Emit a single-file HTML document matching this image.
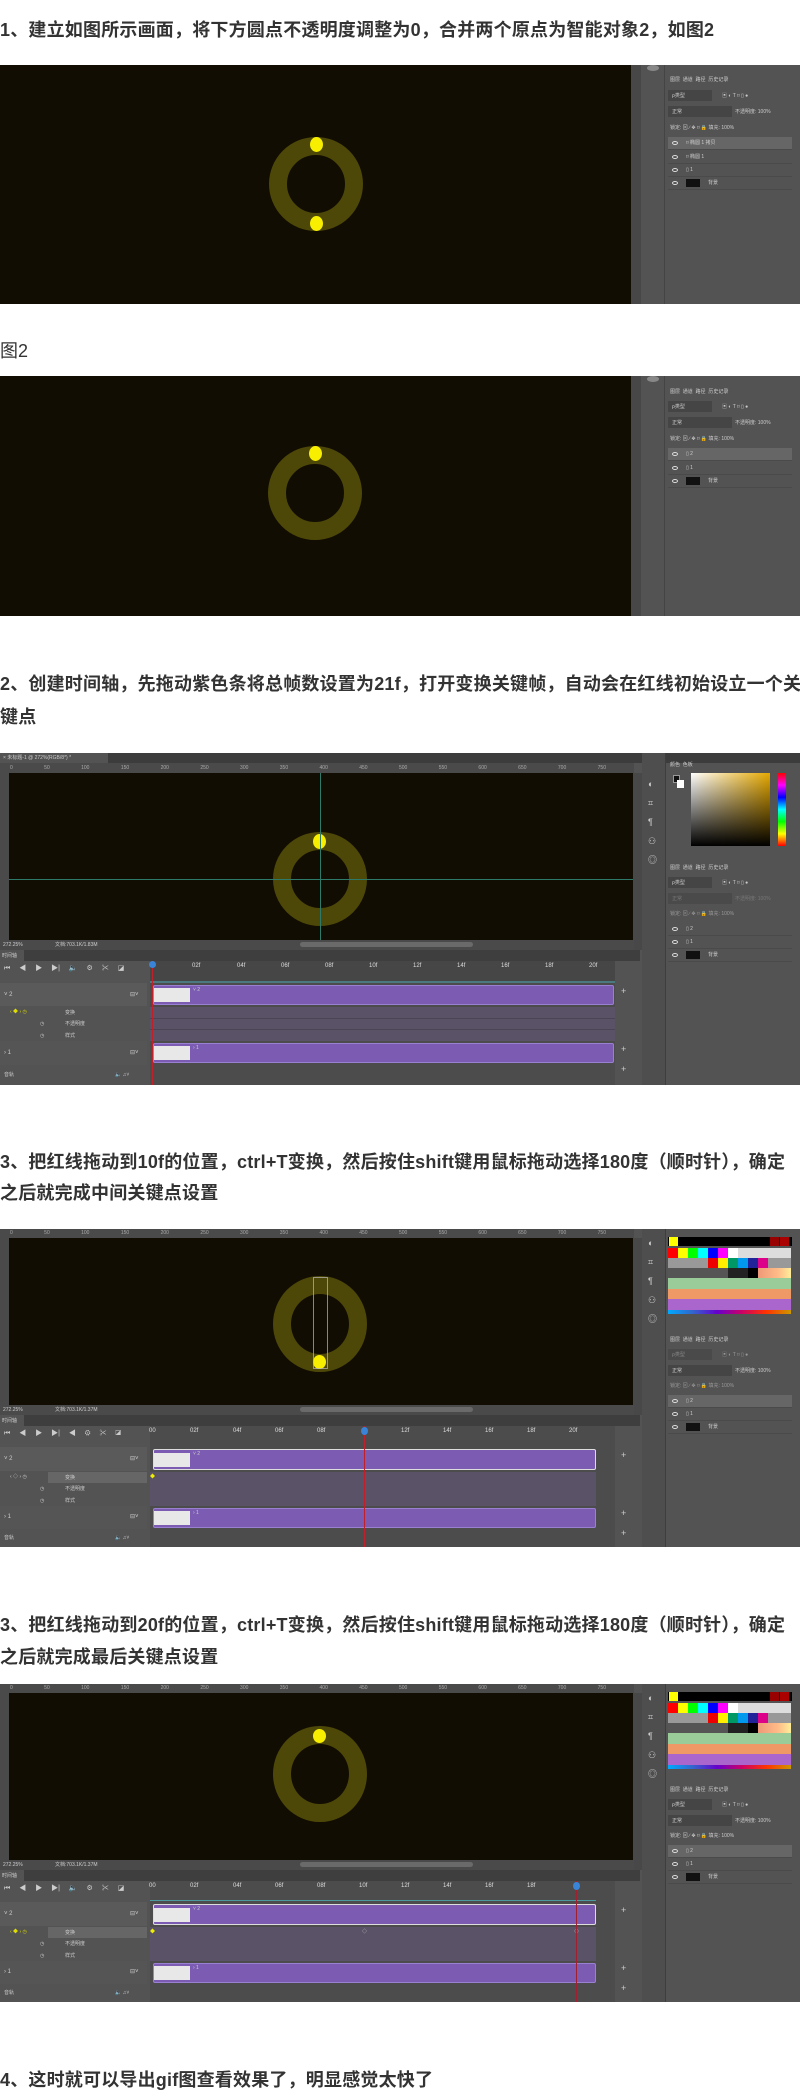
<!DOCTYPE html>
<html><head><meta charset="utf-8">
<style>
*{margin:0;padding:0;box-sizing:border-box}
body{width:800px;height:2094px;background:#fff;position:relative;overflow:hidden;font-family:"Liberation Sans","Noto Sans CJK SC",sans-serif}
.t{position:absolute;left:0;font-size:18px;font-weight:bold;color:#333;line-height:32px;white-space:nowrap;letter-spacing:0.2px}
.ss{position:absolute;left:0;width:800px;overflow:hidden;background:#535353}
.a{position:absolute}
.ring{position:absolute;border-radius:50%;border:18px solid #4d4808;width:94px;height:94px}
.dot{position:absolute;width:13px;height:15px;border-radius:50%;background:#f7ee00}
.px{position:absolute;font-size:5px;color:#ccc;white-space:nowrap;line-height:8px}
.lrow{position:absolute;left:668px;width:124px;height:13px;border-bottom:1px solid #4a4a4a}
.eye{position:absolute;left:4px;top:4px;width:6px;height:4px;border:1px solid #ddd;border-radius:50%}
.purp{position:absolute;background:#7b5cb2;border:1px solid #9a80d0;border-radius:2px}
.thumb{position:absolute;background:#e8e8e8}
.fl{position:absolute;font-size:6px;color:#ddd;top:210px}
.sw{position:absolute;width:9px;height:9px}
.swg{position:absolute;left:668px;width:123px;height:62px;background:
   linear-gradient(to bottom,transparent 0,transparent 10px,#999 10px,#999 20px,#555 20px,#555 30px,#9c9 30px,#9c9 41px,#e96 41px,#e96 51px,#a6c 51px,#a6c 62px),
   linear-gradient(to right,#f00 0,#f00 10px,#ff0 10px,#ff0 20px,#0f0 20px,#0f0 30px,#0ff 30px,#0ff 40px,#00f 40px,#00f 50px,#f0f 50px,#f0f 60px,#fff 60px,#fff 70px,#ddd 70px)}
.swo{position:absolute;left:668px;width:123px;height:10px;background:linear-gradient(to right,transparent 0,transparent 40px,#e00 40px,#e00 50px,#fe0 50px,#fe0 60px,#096 60px,#096 70px,#09e 70px,#09e 80px,#229 80px,#229 90px,#d08 90px,#d08 100px,transparent 100px)}
.swb{position:absolute;left:668px;width:123px;height:10px;background:linear-gradient(to right,transparent 0,transparent 60px,#222 60px,#222 80px,#000 80px,#000 90px,#e97 90px,#fb8 110px,#fe9 123px)}
</style></head><body>

<div class="t" style="top:14px">1、建立如图所示画面，将下方圆点不透明度调整为0，合并两个原点为智能对象2，如图2</div>

<div class="ss" style="top:65px;height:239px">
  <div class="a" style="left:0;top:0;width:631px;height:239px;background:#120d02"></div>
  <div class="a" style="left:631px;top:0;width:10px;height:239px;background:#474747"></div>
  <div class="a" style="left:641px;top:0;width:24px;height:239px;background:#535353;border-right:1px solid #444"></div>
  <div class="a" style="left:647px;top:0;width:12px;height:6px;border-radius:50%;background:#888"></div>
  <div class="ring" style="left:269px;top:72px"></div>
  <div class="dot" style="left:310px;top:72px"></div>
  <div class="dot" style="left:310px;top:151px"></div>
  <div class="px" style="left:670px;top:11px">图层&nbsp; 通道&nbsp; 路径&nbsp; 历史记录</div>
  <div class="a" style="left:668px;top:25px;width:44px;height:11px;background:#454545"></div>
  <div class="px" style="left:672px;top:27px">ρ类型</div>
  <div class="px" style="left:722px;top:27px">▣ ◐ T ⌑ ▯ ●</div>
  <div class="a" style="left:668px;top:41px;width:64px;height:11px;background:#454545"></div>
  <div class="px" style="left:672px;top:43px">正常</div>
  <div class="px" style="left:735px;top:43px">不透明度: 100%</div>
  <div class="px" style="left:670px;top:59px">锁定: ⊠ ∕ ✥ ⌑ 🔒 填充: 100%</div>
  <div class="lrow" style="top:72px;background:#666"><span class="eye"></span><span class="px" style="left:18px;top:2px">⌑ 椭圆 1 拷贝</span></div>
  <div class="lrow" style="top:86px"><span class="eye"></span><span class="px" style="left:18px;top:2px">⌑ 椭圆 1</span></div>
  <div class="lrow" style="top:99px"><span class="eye"></span><span class="px" style="left:18px;top:2px">▯ 1</span></div>
  <div class="lrow" style="top:112px"><span class="eye"></span><span class="a" style="left:18px;top:2px;width:14px;height:8px;background:#111"></span><span class="px" style="left:40px;top:2px">背景</span></div>
</div>

<div class="a" style="left:0;top:336px;font-size:18px;color:#333;line-height:30px">图2</div>

<div class="ss" style="top:376px;height:240px">
  <div class="a" style="left:0;top:0;width:631px;height:240px;background:#120d02"></div>
  <div class="a" style="left:631px;top:0;width:10px;height:240px;background:#474747"></div>
  <div class="a" style="left:641px;top:0;width:24px;height:240px;background:#535353;border-right:1px solid #444"></div>
  <div class="a" style="left:647px;top:0;width:12px;height:6px;border-radius:50%;background:#888"></div>
  <div class="ring" style="left:268px;top:70px"></div>
  <div class="dot" style="left:309px;top:70px"></div>
  <div class="px" style="left:670px;top:12px">图层&nbsp; 通道&nbsp; 路径&nbsp; 历史记录</div>
  <div class="a" style="left:668px;top:25px;width:44px;height:11px;background:#454545"></div>
  <div class="px" style="left:672px;top:27px">ρ类型</div>
  <div class="px" style="left:722px;top:27px">▣ ◐ T ⌑ ▯ ●</div>
  <div class="a" style="left:668px;top:41px;width:64px;height:11px;background:#454545"></div>
  <div class="px" style="left:672px;top:43px">正常</div>
  <div class="px" style="left:735px;top:43px">不透明度: 100%</div>
  <div class="px" style="left:670px;top:59px">锁定: ⊠ ∕ ✥ ⌑ 🔒 填充: 100%</div>
  <div class="lrow" style="top:72px;background:#666"><span class="eye"></span><span class="px" style="left:18px;top:2px">▯ 2</span></div>
  <div class="lrow" style="top:86px"><span class="eye"></span><span class="px" style="left:18px;top:2px">▯ 1</span></div>
  <div class="lrow" style="top:99px"><span class="eye"></span><span class="a" style="left:18px;top:2px;width:14px;height:8px;background:#111"></span><span class="px" style="left:40px;top:2px">背景</span></div>
</div>

<div class="t" style="top:668px">2、创建时间轴，先拖动紫色条将总帧数设置为21f，打开变换关键帧，自动会在红线初始设立一个关</div>
<div class="t" style="top:701px">键点</div>

<div class="ss" style="top:753px;height:332px">
  <div class="a" style="left:0;top:0;width:800px;height:10px;background:#3c3c3c"></div>
  <div class="a" style="left:0;top:0;width:108px;height:10px;background:#535353"></div>
  <div class="px" style="left:3px;top:1px">× 未标题-1 @ 272%(RGB/8*) *</div>
  <div class="a" style="left:0;top:10px;width:634px;height:10px;background:#4a4a4a"></div>
  <div class="px" style="left:10px;top:11px;color:#aaa;word-spacing:30px">0 50 100 150 200 250 300 350 400 450 500 550 600 650 700 750</div>
  <div class="a" style="left:0;top:20px;width:9px;height:167px;background:#4a4a4a"></div>
  <div class="a" style="left:9px;top:20px;width:624px;height:167px;background:#120d02"></div>
  <div class="ring" style="left:273px;top:79px"></div>
  <div class="dot" style="left:313px;top:81px"></div>
  <div class="a" style="left:9px;top:126px;width:624px;height:1px;background:#2e7a6a"></div>
  <div class="a" style="left:320px;top:20px;width:1px;height:175px;background:#2e7a6a"></div>
  <div class="a" style="left:633px;top:20px;width:9px;height:177px;background:#484848"></div>
  <div class="a" style="left:0;top:187px;width:634px;height:10px;background:#4a4a4a"></div>
  <div class="px" style="left:3px;top:188px">272.25%</div><div class="px" style="left:55px;top:188px">文档:703.1K/1.83M</div>
  <div class="a" style="left:300px;top:189px;width:173px;height:5px;border-radius:3px;background:#6a6a6a"></div>
  <div class="a" style="left:0;top:197px;width:640px;height:11px;background:#3e3e3e"></div>
  <div class="a" style="left:0;top:197px;width:24px;height:11px;background:#535353"></div>
  <div class="px" style="left:2px;top:199px">时间轴</div>
  <div class="a" style="left:0;top:208px;width:147px;height:124px;background:#535353"></div>
  <div class="px" style="left:4px;top:212px;font-size:7px;word-spacing:7px">⏮ ◀ ▶ ▶| 🔈 ⚙ ✂ ◪</div>
  <div class="a" style="left:150px;top:208px;width:465px;height:124px;background:#4c4c4c"></div>
  <div class="a" style="left:150px;top:208px;width:465px;height:22px;background:#464646"></div>
  <div class="fl" style="left:192px">02f</div><div class="fl" style="left:237px">04f</div><div class="fl" style="left:281px">06f</div><div class="fl" style="left:325px">08f</div><div class="fl" style="left:369px">10f</div><div class="fl" style="left:413px">12f</div><div class="fl" style="left:457px">14f</div><div class="fl" style="left:501px">16f</div><div class="fl" style="left:545px">18f</div><div class="fl" style="left:589px">20f</div>
  <div class="a" style="left:150px;top:228px;width:465px;height:2px;background:#4a7a80"></div>
  <div class="a" style="left:0;top:230px;width:147px;height:23px;background:#5a5a5a"></div>
  <div class="px" style="left:4px;top:238px;font-size:6px">˅ 2</div><div class="px" style="left:130px;top:238px;font-size:6px">⊟˅</div>
  <div class="purp" style="left:153px;top:232px;width:461px;height:20px"></div>
  <div class="thumb" style="left:154px;top:235px;width:36px;height:14px"></div>
  <div class="px" style="left:193px;top:233px">˅ 2</div>
  <div class="a" style="left:150px;top:254px;width:465px;height:34px;background:#5a5266"></div>
  <div class="a" style="left:150px;top:265px;width:465px;height:1px;background:#4a4454"></div>
  <div class="a" style="left:150px;top:276px;width:465px;height:1px;background:#4a4454"></div>
  <div class="px" style="left:10px;top:255px;color:#dd0">‹ ◆ › ◷</div>
  <div class="px" style="left:65px;top:256px">变换</div>
  <div class="px" style="left:40px;top:267px">◷</div><div class="px" style="left:65px;top:267px">不透明度</div>
  <div class="px" style="left:40px;top:279px">◷</div><div class="px" style="left:65px;top:279px">样式</div>
  <div class="a" style="left:0;top:288px;width:147px;height:24px;background:#555"></div>
  <div class="px" style="left:4px;top:296px;font-size:6px">› 1</div><div class="px" style="left:130px;top:296px;font-size:6px">⊟˅</div>
  <div class="purp" style="left:153px;top:290px;width:461px;height:20px"></div>
  <div class="thumb" style="left:154px;top:293px;width:36px;height:14px"></div>
  <div class="px" style="left:193px;top:291px">› 1</div>
  <div class="px" style="left:4px;top:318px">音轨</div><div class="px" style="left:115px;top:318px">🔈 ♫˅</div>
  <div class="a" style="left:152px;top:208px;width:1px;height:124px;background:#c0202a"></div>
  <div class="a" style="left:149px;top:208px;width:7px;height:7px;border-radius:50%;background:#3a84d8"></div>
  <div class="px" style="left:621px;top:234px;font-size:9px">+</div><div class="px" style="left:621px;top:292px;font-size:9px">+</div><div class="px" style="left:621px;top:312px;font-size:9px">+</div>
  <div class="a" style="left:642px;top:0;width:24px;height:332px;background:#4e4e4e;border-right:1px solid #3e3e3e"></div>
  <div class="px" style="left:648px;top:22px;font-size:9px;line-height:19px">◐<br>⌗<br>¶<br>⚇<br>◎</div>
  <div class="px" style="left:670px;top:8px">颜色&nbsp; 色板</div>
  <div class="a" style="left:673px;top:22px;width:7px;height:8px;background:#111;border:1px solid #999"></div>
  <div class="a" style="left:677px;top:27px;width:7px;height:8px;background:#fff"></div>
  <div class="a" style="left:691px;top:20px;width:79px;height:73px;background:linear-gradient(to bottom,rgba(0,0,0,0),#000),linear-gradient(to right,#fff,#e5a800)"></div>
  <div class="a" style="left:778px;top:20px;width:8px;height:73px;background:linear-gradient(#f00,#f0f,#00f,#0ff,#0f0,#ff0,#f00)"></div>
  <div class="px" style="left:670px;top:111px">图层&nbsp; 通道&nbsp; 路径&nbsp; 历史记录</div>
  <div class="a" style="left:668px;top:124px;width:44px;height:11px;background:#454545"></div>
  <div class="px" style="left:672px;top:126px">ρ类型</div><div class="px" style="left:722px;top:126px">▣ ◐ T ⌑ ▯ ●</div>
  <div class="a" style="left:668px;top:140px;width:64px;height:11px;background:#4a4a4a"></div>
  <div class="px" style="left:672px;top:142px;color:#777">正常</div><div class="px" style="left:735px;top:142px;color:#777">不透明度: 100%</div>
  <div class="px" style="left:670px;top:157px;color:#999">锁定: ⊠ ∕ ✥ ⌑ 🔒 填充: 100%</div>
  <div class="lrow" style="top:170px"><span class="eye"></span><span class="px" style="left:18px;top:2px">▯ 2</span></div>
  <div class="lrow" style="top:183px"><span class="eye"></span><span class="px" style="left:18px;top:2px">▯ 1</span></div>
  <div class="lrow" style="top:196px"><span class="eye"></span><span class="a" style="left:18px;top:2px;width:14px;height:8px;background:#111"></span><span class="px" style="left:40px;top:2px">背景</span></div>
</div>

<div class="t" style="top:1146px">3、把红线拖动到10f的位置，ctrl+T变换，然后按住shift键用鼠标拖动选择180度（顺时针），确定</div>
<div class="t" style="top:1177px">之后就完成中间关键点设置</div>

<div class="ss" style="top:1229px;height:318px">
  <div class="a" style="left:0;top:0;width:634px;height:9px;background:#4a4a4a"></div>
  <div class="px" style="left:10px;top:0px;color:#aaa;word-spacing:30px">0 50 100 150 200 250 300 350 400 450 500 550 600 650 700 750</div>
  <div class="a" style="left:0;top:9px;width:9px;height:167px;background:#4a4a4a"></div>
  <div class="a" style="left:9px;top:9px;width:624px;height:167px;background:#120d02"></div>
  <div class="ring" style="left:273px;top:47px;height:96px"></div>
  <div class="dot" style="left:313px;top:126px;height:14px"></div>
  <div class="a" style="left:313px;top:48px;width:15px;height:92px;border:1px solid #bbb;opacity:.7"></div>
  <div class="a" style="left:633px;top:9px;width:9px;height:177px;background:#484848"></div>
  <div class="a" style="left:0;top:176px;width:634px;height:10px;background:#4a4a4a"></div>
  <div class="px" style="left:3px;top:177px">272.25%</div><div class="px" style="left:55px;top:177px">文档:703.1K/1.37M</div>
  <div class="a" style="left:300px;top:178px;width:173px;height:5px;border-radius:3px;background:#6a6a6a"></div>
  <div class="a" style="left:0;top:186px;width:640px;height:11px;background:#3e3e3e"></div>
  <div class="a" style="left:0;top:186px;width:24px;height:11px;background:#535353"></div>
  <div class="px" style="left:2px;top:188px">时间轴</div>
  <div class="a" style="left:0;top:197px;width:147px;height:121px;background:#535353"></div>
  <div class="px" style="left:4px;top:201px;font-size:7px;word-spacing:7px">⏮ ◀ ▶ ▶| ◀ ⚙ ✂ ◪</div>
  <div class="a" style="left:150px;top:197px;width:465px;height:121px;background:#4c4c4c"></div>
  <div class="fl" style="left:149px;top:199px">00</div><div class="fl" style="left:190px;top:199px">02f</div><div class="fl" style="left:233px;top:199px">04f</div><div class="fl" style="left:275px;top:199px">06f</div><div class="fl" style="left:317px;top:199px">08f</div><div class="fl" style="left:401px;top:199px">12f</div><div class="fl" style="left:443px;top:199px">14f</div><div class="fl" style="left:485px;top:199px">16f</div><div class="fl" style="left:527px;top:199px">18f</div><div class="fl" style="left:569px;top:199px">20f</div>
  <div class="a" style="left:0;top:218px;width:147px;height:24px;background:#5a5a5a"></div>
  <div class="px" style="left:4px;top:226px;font-size:6px">˅ 2</div><div class="px" style="left:130px;top:226px;font-size:6px">⊟˅</div>
  <div class="purp" style="left:153px;top:220px;width:443px;height:21px;border-color:#ddd"></div>
  <div class="thumb" style="left:154px;top:224px;width:36px;height:14px"></div>
  <div class="px" style="left:193px;top:221px">˅ 2</div>
  <div class="a" style="left:150px;top:243px;width:446px;height:34px;background:#5a5266"></div>
  <div class="a" style="left:48px;top:243px;width:99px;height:11px;background:#666"></div>
  <div class="px" style="left:10px;top:244px">‹ ◇ › ◷</div>
  <div class="px" style="left:65px;top:245px">变换</div>
  <div class="px" style="left:40px;top:256px">◷</div><div class="px" style="left:65px;top:256px">不透明度</div>
  <div class="px" style="left:40px;top:268px">◷</div><div class="px" style="left:65px;top:268px">样式</div>
  <div class="px" style="left:150px;top:244px;color:#ee0">◆</div>
  <div class="a" style="left:0;top:277px;width:147px;height:23px;background:#555"></div>
  <div class="px" style="left:4px;top:284px;font-size:6px">› 1</div><div class="px" style="left:130px;top:284px;font-size:6px">⊟˅</div>
  <div class="purp" style="left:153px;top:279px;width:443px;height:20px"></div>
  <div class="thumb" style="left:154px;top:282px;width:36px;height:14px"></div>
  <div class="px" style="left:193px;top:280px">› 1</div>
  <div class="px" style="left:4px;top:305px">音轨</div><div class="px" style="left:115px;top:305px">🔈 ♫˅</div>
  <div class="a" style="left:364px;top:197px;width:1px;height:121px;background:#c0202a"></div>
  <div class="a" style="left:361px;top:198px;width:7px;height:8px;border-radius:50%;background:#3a84d8"></div>
  <div class="px" style="left:621px;top:222px;font-size:9px">+</div><div class="px" style="left:621px;top:280px;font-size:9px">+</div><div class="px" style="left:621px;top:300px;font-size:9px">+</div>
  <div class="a" style="left:642px;top:0;width:24px;height:318px;background:#4e4e4e;border-right:1px solid #3e3e3e"></div>
  <div class="px" style="left:648px;top:5px;font-size:9px;line-height:19px">◐<br>⌗<br>¶<br>⚇<br>◎</div>
  <div class="a" style="left:668px;top:8px;width:124px;height:9px;background:#000"></div>
  <div class="sw" style="left:669px;top:8px;background:#ff0"></div><div class="sw" style="left:770px;top:8px;background:#900"></div><div class="sw" style="left:780px;top:8px;background:#a00"></div>
  <div class="swg" style="top:19px"></div>
  <div class="swo" style="top:29px"></div>
  <div class="swb" style="top:39px"></div>
  <div class="a" style="left:668px;top:81px;width:123px;height:4px;background:linear-gradient(to right,#0af,#36c,#60c,#c06,#f30,#c90)"></div>
  <div class="px" style="left:670px;top:107px">图层&nbsp; 通道&nbsp; 路径&nbsp; 历史记录</div>
  <div class="a" style="left:668px;top:120px;width:44px;height:11px;background:#4a4a4a"></div>
  <div class="px" style="left:672px;top:122px;color:#888">ρ类型</div><div class="px" style="left:722px;top:122px;color:#999">▣ ◐ T ⌑ ▯ ●</div>
  <div class="a" style="left:668px;top:136px;width:64px;height:11px;background:#454545"></div>
  <div class="px" style="left:672px;top:138px">正常</div><div class="px" style="left:735px;top:138px">不透明度: 100%</div>
  <div class="px" style="left:670px;top:153px;color:#999">锁定: ⊠ ∕ ✥ ⌑ 🔒 填充: 100%</div>
  <div class="lrow" style="top:166px;background:#666"><span class="eye"></span><span class="px" style="left:18px;top:2px">▯ 2</span></div>
  <div class="lrow" style="top:179px"><span class="eye"></span><span class="px" style="left:18px;top:2px">▯ 1</span></div>
  <div class="lrow" style="top:192px"><span class="eye"></span><span class="a" style="left:18px;top:2px;width:14px;height:8px;background:#111"></span><span class="px" style="left:40px;top:2px">背景</span></div>
</div>

<div class="t" style="top:1609px">3、把红线拖动到20f的位置，ctrl+T变换，然后按住shift键用鼠标拖动选择180度（顺时针），确定</div>
<div class="t" style="top:1641px">之后就完成最后关键点设置</div>

<div class="ss" style="top:1684px;height:318px">
  <div class="a" style="left:0;top:0;width:634px;height:9px;background:#4a4a4a"></div>
  <div class="px" style="left:10px;top:0px;color:#aaa;word-spacing:30px">0 50 100 150 200 250 300 350 400 450 500 550 600 650 700 750</div>
  <div class="a" style="left:0;top:9px;width:9px;height:167px;background:#4a4a4a"></div>
  <div class="a" style="left:9px;top:9px;width:624px;height:167px;background:#120d02"></div>
  <div class="ring" style="left:273px;top:42px;height:96px"></div>
  <div class="dot" style="left:313px;top:45px;height:14px"></div>
  <div class="a" style="left:633px;top:9px;width:9px;height:177px;background:#484848"></div>
  <div class="a" style="left:0;top:176px;width:634px;height:10px;background:#4a4a4a"></div>
  <div class="px" style="left:3px;top:177px">272.25%</div><div class="px" style="left:55px;top:177px">文档:703.1K/1.37M</div>
  <div class="a" style="left:300px;top:178px;width:173px;height:5px;border-radius:3px;background:#6a6a6a"></div>
  <div class="a" style="left:0;top:186px;width:640px;height:11px;background:#3e3e3e"></div>
  <div class="a" style="left:0;top:186px;width:24px;height:11px;background:#535353"></div>
  <div class="px" style="left:2px;top:188px">时间轴</div>
  <div class="a" style="left:0;top:197px;width:147px;height:121px;background:#535353"></div>
  <div class="px" style="left:4px;top:201px;font-size:7px;word-spacing:7px">⏮ ◀ ▶ ▶| 🔈 ⚙ ✂ ◪</div>
  <div class="a" style="left:150px;top:197px;width:465px;height:121px;background:#4c4c4c"></div>
  <div class="fl" style="left:149px;top:199px">00</div><div class="fl" style="left:190px;top:199px">02f</div><div class="fl" style="left:233px;top:199px">04f</div><div class="fl" style="left:275px;top:199px">06f</div><div class="fl" style="left:317px;top:199px">08f</div><div class="fl" style="left:359px;top:199px">10f</div><div class="fl" style="left:401px;top:199px">12f</div><div class="fl" style="left:443px;top:199px">14f</div><div class="fl" style="left:485px;top:199px">16f</div><div class="fl" style="left:527px;top:199px">18f</div>
  <div class="a" style="left:150px;top:216px;width:446px;height:1px;background:#4a9aa0"></div>
  <div class="a" style="left:0;top:218px;width:147px;height:24px;background:#5a5a5a"></div>
  <div class="px" style="left:4px;top:226px;font-size:6px">˅ 2</div><div class="px" style="left:130px;top:226px;font-size:6px">⊟˅</div>
  <div class="purp" style="left:153px;top:220px;width:443px;height:21px;border-color:#ddd"></div>
  <div class="thumb" style="left:154px;top:224px;width:36px;height:14px"></div>
  <div class="px" style="left:193px;top:221px">˅ 2</div>
  <div class="a" style="left:150px;top:243px;width:446px;height:34px;background:#5a5266"></div>
  <div class="a" style="left:48px;top:243px;width:99px;height:11px;background:#666"></div>
  <div class="px" style="left:10px;top:244px;color:#dd0">‹ ◆ › ◷</div>
  <div class="px" style="left:65px;top:245px">变换</div>
  <div class="px" style="left:40px;top:256px">◷</div><div class="px" style="left:65px;top:256px">不透明度</div>
  <div class="px" style="left:40px;top:268px">◷</div><div class="px" style="left:65px;top:268px">样式</div>
  <div class="px" style="left:150px;top:244px;color:#ee0">◆</div><div class="px" style="left:362px;top:244px">◇</div><div class="px" style="left:574px;top:244px">◇</div>
  <div class="a" style="left:0;top:277px;width:147px;height:23px;background:#555"></div>
  <div class="px" style="left:4px;top:284px;font-size:6px">› 1</div><div class="px" style="left:130px;top:284px;font-size:6px">⊟˅</div>
  <div class="purp" style="left:153px;top:279px;width:443px;height:20px"></div>
  <div class="thumb" style="left:154px;top:282px;width:36px;height:14px"></div>
  <div class="px" style="left:193px;top:280px">› 1</div>
  <div class="px" style="left:4px;top:305px">音轨</div><div class="px" style="left:115px;top:305px">🔈 ♫˅</div>
  <div class="a" style="left:576px;top:197px;width:1px;height:121px;background:#a02030"></div>
  <div class="a" style="left:573px;top:198px;width:7px;height:8px;border-radius:50%;background:#3a84d8"></div>
  <div class="px" style="left:621px;top:222px;font-size:9px">+</div><div class="px" style="left:621px;top:280px;font-size:9px">+</div><div class="px" style="left:621px;top:300px;font-size:9px">+</div>
  <div class="a" style="left:642px;top:0;width:24px;height:318px;background:#4e4e4e;border-right:1px solid #3e3e3e"></div>
  <div class="px" style="left:648px;top:5px;font-size:9px;line-height:19px">◐<br>⌗<br>¶<br>⚇<br>◎</div>
  <div class="a" style="left:668px;top:8px;width:124px;height:9px;background:#000"></div>
  <div class="sw" style="left:669px;top:8px;background:#ff0"></div><div class="sw" style="left:770px;top:8px;background:#900"></div><div class="sw" style="left:780px;top:8px;background:#a00"></div>
  <div class="swg" style="top:19px"></div>
  <div class="swo" style="top:29px"></div>
  <div class="swb" style="top:39px"></div>
  <div class="a" style="left:668px;top:81px;width:123px;height:4px;background:linear-gradient(to right,#0af,#36c,#60c,#c06,#f30,#c90)"></div>
  <div class="px" style="left:670px;top:102px">图层&nbsp; 通道&nbsp; 路径&nbsp; 历史记录</div>
  <div class="a" style="left:668px;top:115px;width:44px;height:11px;background:#454545"></div>
  <div class="px" style="left:672px;top:117px">ρ类型</div><div class="px" style="left:722px;top:117px">▣ ◐ T ⌑ ▯ ●</div>
  <div class="a" style="left:668px;top:131px;width:64px;height:11px;background:#454545"></div>
  <div class="px" style="left:672px;top:133px">正常</div><div class="px" style="left:735px;top:133px">不透明度: 100%</div>
  <div class="px" style="left:670px;top:148px">锁定: ⊠ ∕ ✥ ⌑ 🔒 填充: 100%</div>
  <div class="lrow" style="top:161px;background:#666"><span class="eye"></span><span class="px" style="left:18px;top:2px">▯ 2</span></div>
  <div class="lrow" style="top:174px"><span class="eye"></span><span class="px" style="left:18px;top:2px">▯ 1</span></div>
  <div class="lrow" style="top:187px"><span class="eye"></span><span class="a" style="left:18px;top:2px;width:14px;height:8px;background:#111"></span><span class="px" style="left:40px;top:2px">背景</span></div>
</div>

<div class="t" style="top:2064px">4、这时就可以导出gif图查看效果了，明显感觉太快了</div>
</body></html>
